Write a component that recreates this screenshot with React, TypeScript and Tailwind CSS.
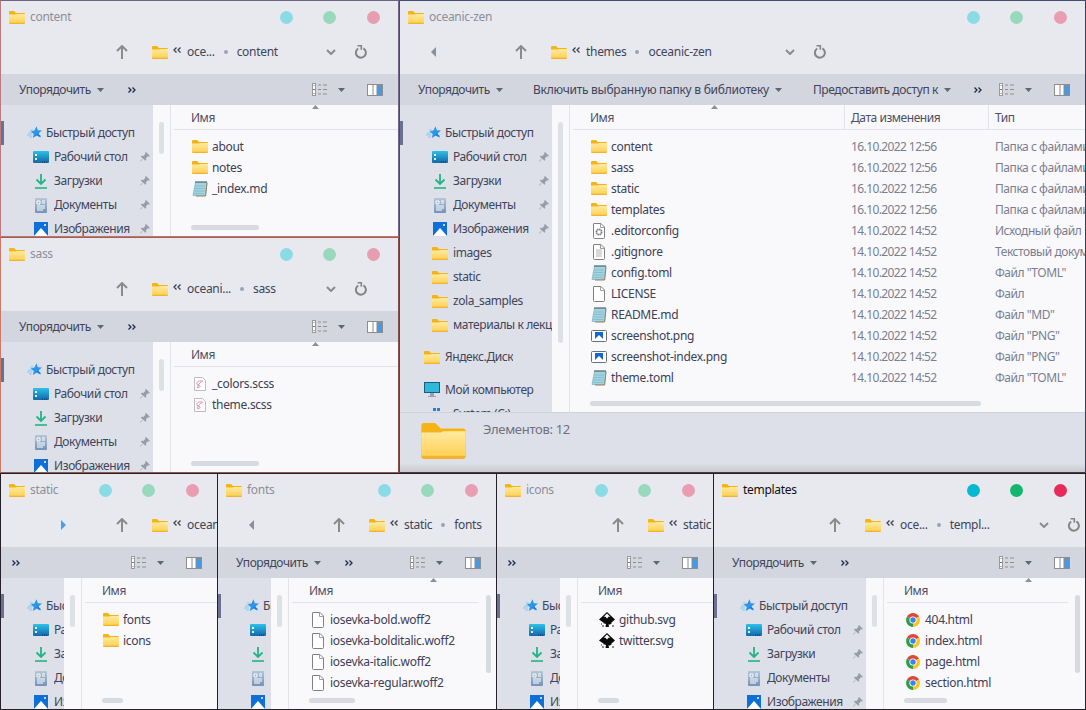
import { useId, type ReactNode } from "react";

function Folder({ big }: { big?: boolean }) {
  const id = useId();
  return (
    <svg viewBox="0 0 16 13" className={big ? "w-[45px] h-[36px] shrink-0" : "w-4 h-[13px] shrink-0"}>
      <defs>
        <linearGradient id={id} x1="0" y1="0" x2="0" y2="1">
          <stop offset="0" stopColor="#ffeaa0" />
          <stop offset="1" stopColor="#ffd257" />
        </linearGradient>
      </defs>
      <path d="M0 1a1 1 0 0 1 1-1h4l2 2h8a1 1 0 0 1 1 1v1H0z" fill="#f6b414" />
      <path d="M0 3h16v9a1 1 0 0 1-1 1H1a1 1 0 0 1-1-1z" fill="#f3b22c" />
      <path d="M0 3.4h7l1-.4h8v8.8H0z" fill={`url(#${id})`} />
    </svg>
  );
}

const Up = () => (
  <svg viewBox="0 0 12 14" className="w-3 h-[14px] shrink-0">
    <path d="M6 1v13M1 6l5-5 5 5" fill="none" stroke="#8b8b8b" strokeWidth="2" />
  </svg>
);

const Dbl = ({ left, color = "#1c2b4d" }: { left?: boolean; color?: string }) => (
  <svg viewBox="0 0 8 6" className={`w-2 h-[6px] shrink-0 ${left ? "rotate-180" : ""}`}>
    <path d="M.5.5 3 3 .5 5.500M4.500.5 7 3 4.500 5.500" fill="none" stroke={color} strokeWidth="1.300" />
  </svg>
);

const Caret = () => (
  <svg viewBox="0 0 7 4" className="w-[7px] h-1 shrink-0">
    <path d="M0 0h7L3.500 4z" fill="#5f6675" />
  </svg>
);

const ViewIcon = () => (
  <svg viewBox="0 0 16 13" className="w-4 h-[13px] shrink-0">
    <rect x=".5" y=".5" width="3" height="12" fill="#fff" stroke="#9a9a9a" />
    <path d="M1 6h2v1H1z" fill="#777" />
    <path d="M1.500 2h1v1h-1z" fill="#4a7" />
    <path d="M1.500 10h1v1h-1z" fill="#d44" />
    <path d="M6 2h3M11 2h4M6 6.500h3M11 6.500h4M6 11h3M11 11h4" stroke="#8f8f8f" />
  </svg>
);

const PaneIcon = () => (
  <svg viewBox="0 0 16 12" className="w-4 h-3 shrink-0">
    <rect width="16" height="12" fill="#8d8d8d" />
    <rect x="1" y="1" width="4.500" height="10" fill="#fff" />
    <rect x="6.500" y="1" width="3" height="10" fill="#fff" />
    <rect x="10.500" y="2" width="4.500" height="9" fill="#4a97e2" />
  </svg>
);

const Refresh = () => (
  <svg viewBox="0 0 12 14" className="w-3 h-[14px] shrink-0">
    <path d="M3.200 3.500A5 5 0 1 0 8.400 3.400" fill="none" stroke="#858585" strokeWidth="2" />
    <path d="M2.500 .8h3.800v4" fill="none" stroke="#858585" strokeWidth="1.600" />
  </svg>
);

const Chevron = () => (
  <svg viewBox="0 0 10 6" className="w-[10px] h-[6px] shrink-0">
    <path d="M1 1l4 4 4-4" fill="none" stroke="#8b8b8b" strokeWidth="2" />
  </svg>
);

const Star = () => (
  <svg viewBox="0 0 15 14" className="w-[15px] h-[14px] shrink-0">
    <path d="M9.500 .3l1.300 4 4.200.2-3.200 2.700 1 4.300-3.600-2.400L5.800 12l1-3.900L3.500 5.400l3.900-.9z" fill="#2a97ee" />
    <path d="M5.800 12l4.400-2.800 3.600 2.400-.5-2.400-3.300-1.700z" fill="#1c82dc" />
    <path d="M1 7h4M0 9h5M2 11h3M3 4h3" stroke="#8cc6f2" />
  </svg>
);

const Desktop = () => (
  <svg viewBox="0 0 16 12" className="w-4 h-3 shrink-0">
    <defs>
      <linearGradient id="dsk" x1="0" y1="0" x2="0" y2="1">
        <stop offset="0" stopColor="#2cc1e8" />
        <stop offset="1" stopColor="#1467a8" />
      </linearGradient>
    </defs>
    <rect width="16" height="12" rx="1" fill="url(#dsk)" />
    <rect x="2" y="3" width="2" height="2" fill="#fff" />
    <rect x="2" y="7" width="2" height="2" fill="#d7f2fb" />
    <path d="M9 11h6" stroke="#0c3f70" strokeDasharray="1 1" />
  </svg>
);

const Download = () => (
  <svg viewBox="0 0 12 15" className="w-3 h-[15px] mx-0.5 shrink-0">
    <path d="M6 0v9.500M1.500 5.500 6 10l4.500-4.500" fill="none" stroke="#22b488" strokeWidth="1.800" />
    <path d="M0 14h12" stroke="#22b488" strokeWidth="1.600" />
  </svg>
);

const Docs = () => (
  <svg viewBox="0 0 12 15" className="w-3 h-[15px] mx-0.5 shrink-0">
    <defs>
      <linearGradient id="dcs" x1="0" y1="0" x2="0" y2="1">
        <stop offset="0" stopColor="#b5c6d8" />
        <stop offset="1" stopColor="#7393b8" />
      </linearGradient>
    </defs>
    <rect width="12" height="15" rx="1" fill="url(#dcs)" />
    <path d="M2 3h3v3H2zM7 3h3M7 5h3M2 8h8M2 10h8M2 12h6" stroke="#fff" fill="none" />
  </svg>
);

const Pictures = () => (
  <svg viewBox="0 0 14 14" className="w-[14px] h-[14px] mx-px shrink-0">
    <rect width="14" height="14" fill="#0f6fd8" />
    <path d="M0 14 7 6l7 8z" fill="#fff" />
    <circle cx="11" cy="3" r="1" fill="#fff" />
  </svg>
);

const Pin = () => (
  <svg viewBox="0 0 10 10" className="w-[10px] h-[10px] shrink-0">
    <path d="M6 0l4 4-1 .6-1-.4-2 2 .2 1.800-.8.8L3 6.500 .6 9.600 0 9l2.800-2.600-2-2L1.500 3.700l1.800.2 2-2-.2-1z" fill="#989ca6" />
  </svg>
);

const Monitor = () => (
  <svg viewBox="0 0 16 16" className="w-4 h-4 shrink-0">
    <rect width="16" height="11" rx="1" fill="#26a2c4" />
    <rect x=".5" y=".5" width="15" height="10" fill="#2fb8d8" stroke="#175f80" />
    <path d="M6 11h4v3H6zM4 14h8v1H4z" fill="#97a3ad" />
  </svg>
);

const Drive = () => (
  <svg viewBox="0 0 16 14" className="w-4 h-[14px] shrink-0">
    <path d="M1 1h3v3H1zM5 1h3v3H5zM1 5h3v3H1zM5 5h3v3H5z" fill="#1c84e0" />
    <path d="M0 11h16v2H0z" fill="#2a2a33" />
  </svg>
);

const NoteFile = () => (
  <svg viewBox="0 0 16 16" className="w-4 h-4 shrink-0">
    <path d="M3.500 1H15l-1.500 13.500H1z" fill="#a4d3e0" stroke="#6ea9ba" strokeWidth=".6" />
    <path d="M3 5h10M2.700 7.500h10M2.400 10h10M2 12.500h10" stroke="#7fbacb" strokeWidth=".8" />
    <path d="M15 2 13.600 15H4" fill="none" stroke="#98805c" />
    <path d="M3.500 1H15" stroke="#333" strokeWidth="1.400" strokeDasharray="1 1" />
  </svg>
);

const Doc = ({ children }: { children?: ReactNode }) => (
  <svg viewBox="0 0 12 16" className="w-3 h-4 mx-0.5 shrink-0">
    <path d="M.5 1a.5.5 0 0 1 .5-.5h7L11.500 4v10.500a1 1 0 0 1-1 1H1.500a1 1 0 0 1-1-1z" fill="#fff" stroke="#808080" />
    <path d="M7.500 .5V4.500h4" fill="none" stroke="#a0a0a0" />
    {children}
  </svg>
);

const GearFile = () => (
  <Doc>
    <circle cx="6" cy="9" r="2.600" fill="none" stroke="#7a7f86" strokeWidth="1.800" strokeDasharray="1.500 .5" />
  </Doc>
);

const TextFile = () => (
  <Doc>
    <path d="M3 6h6M3 8h6M3 10h6M3 12h6" stroke="#b4b4b4" />
  </Doc>
);

const ScssFile = () => (
  <svg viewBox="0 0 12 14" className="w-3 h-[14px] mx-0.5 shrink-0">
    <path d="M.5.5h8l3 3v10H.5z" fill="#fff" stroke="#bdbdbd" />
    <path d="M9 4.500C7 3 3 4 2.800 6.500c-.2 1.800 3.500 1.300 3.200 3-.2 1-1.800 1.700-2.600 1 1-3.500 3-5.500 4.800-6" fill="none" stroke="#e88aa8" />
  </svg>
);

const PngFile = () => (
  <svg viewBox="0 0 16 12" className="w-4 h-3 shrink-0">
    <rect x=".5" y=".5" width="15" height="11" rx="1" fill="#fff" stroke="#6a7078" />
    <rect x="4" y="2" width="8" height="7" fill="#1467cc" />
    <path d="M4 9l4-4 4 4z" fill="#fff" />
  </svg>
);

const Inkscape = () => (
  <svg viewBox="0 0 16 16" className="w-4 h-4 shrink-0">
    <path d="M8 0 16 7.500 12 11h1l-2 1.500H9.500l.5 2.500H6.500l.5-3L4 11h1L0 7.500z" fill="#0a0a0a" />
    <path d="M8 1.500 11.500 5 9.800 4.600 8 6.400 6.200 4.600 4.500 5z" fill="#fff" />
    <path d="M2 12h1M13 14h2M3 14h2" stroke="#222" />
  </svg>
);

const Chrome = () => (
  <svg viewBox="0 0 14 14" className="w-[14px] h-[14px] mx-px shrink-0">
    <path d="M7 7 1 3.500A7 7 0 0 1 13 3.500z" fill="#e2453a" />
    <path d="M7 7h7A7 7 0 0 1 7 14z" fill="#fbc524" />
    <path d="M13 3.500A7 7 0 0 1 14 7H7z" fill="#fbc524" />
    <path d="M7 7v7A7 7 0 0 1 1 3.500z" fill="#2f9e4b" />
    <circle cx="7" cy="7" r="3.600" fill="#fff" />
    <circle cx="7" cy="7" r="2.700" fill="#3b82ec" />
  </svg>
);

type Row = { name: string; icon: ReactNode; date?: string; type?: string };

const folderRow = (name: string): Row => ({ name, icon: <Folder /> });

type Tool = { label: string; className: string };

type Side = { label: string; icon: ReactNode; pinned?: boolean; className?: string };

const quick: Side[] = [
  { label: "Рабочий стол", icon: <Desktop />, pinned: true },
  { label: "Загрузки", icon: <Download />, pinned: true },
  { label: "Документы", icon: <Docs />, pinned: true },
  { label: "Изображения", icon: <Pictures />, pinned: true },
];

const longSide: Side[] = [
  ...quick,
  { label: "images", icon: <Folder /> },
  { label: "static", icon: <Folder /> },
  { label: "zola_samples", icon: <Folder /> },
  { label: "материалы к лекциям", icon: <Folder /> },
  { label: "Яндекс.Диск", icon: <Folder />, className: "pl-[24px] mt-[8px]" },
  { label: "Мой компьютер", icon: <Monitor />, className: "pl-[24px] mt-[9px]" },
  { label: "System (C:)", icon: <Drive /> },
];

type WinProps = {
  title: string;
  active?: boolean;
  className: string;
  sideClass?: string;
  back?: boolean;
  forward?: boolean;
  crumbs: string[];
  addrClass?: string;
  tools?: Tool[];
  compact?: boolean;
  side?: Side[];
  columns?: boolean;
  rows: Row[];
  hbarClass: string;
  vbar?: boolean;
  status?: string;
};

function Win({
  title,
  active,
  className,
  sideClass = "w-[152px]",
  back,
  forward,
  crumbs,
  addrClass = "w-[174px]",
  tools = [],
  compact,
  side = quick,
  columns,
  rows,
  hbarClass,
  vbar,
  status,
}: WinProps) {
  return (
    <div className={`flex flex-col overflow-hidden border bg-[#e8e9ef] tracking-[-0.3px] ${className}`}>
      <div className="h-8 shrink-0 flex items-center pl-2 pr-[18px]">
        <Folder />
        <span className={`ml-[5px] text-xs ${active ? "text-[#111]" : "text-[#8c8e9a]"}`}>{title}</span>
        <div className={`ml-auto w-[13px] h-[13px] rounded-full ${active ? "bg-[#06b9d0]" : "bg-[#8bdbe7]"}`} />
        <div className={`ml-[30px] w-[13px] h-[13px] rounded-full ${active ? "bg-[#12b76f]" : "bg-[#98d9bd]"}`} />
        <div className={`ml-[31px] w-[13px] h-[13px] rounded-full ${active ? "bg-[#e82a58]" : "bg-[#e99db2]"}`} />
      </div>

      <div className="h-[41px] shrink-0 flex items-center pb-[3px] text-xs text-[#41445a] whitespace-nowrap">
        <div className="w-[115px] shrink-0 flex items-center">
          {back && <div className="ml-[31px] border-y-[5px] border-y-transparent border-r-[5px] border-r-[#8b8f98]" />}
          {forward && <div className="ml-[60px] border-y-[5px] border-y-transparent border-l-[5px] border-l-[#4a9fe8]" />}
        </div>
        <div className="w-[36px] shrink-0">
          <Up />
        </div>
        <div className={`${addrClass} shrink-0 flex items-center`}>
          <Folder />
          <div className="ml-[5px] mr-[6px] mb-1">
            <Dbl left color="#3a3f50" />
          </div>
          <span>{crumbs[0]}</span>
          {crumbs[1] && (
            <>
              <span className="mx-[9px] w-1 h-1 rounded-full bg-[#9aa3b5]" />
              <span>{crumbs[1]}</span>
            </>
          )}
        </div>
        <Chevron />
        <div className="ml-[19px]">
          <Refresh />
        </div>
      </div>

      <div
        className={`h-[31px] shrink-0 flex items-center bg-[#d3d6de] pr-[15px] text-xs text-[#41445a] whitespace-nowrap tracking-[-0.45px] ${
          compact ? "pl-[11px]" : "pl-[18px]"
        }`}
      >
        {!compact && <span className="w-[72px] shrink-0">Упорядочить</span>}
        {!compact && (
          <div className="ml-[6px]">
            <Caret />
          </div>
        )}
        {tools.map((t) => (
          <div key={t.label} className={`flex items-center shrink-0 ${t.className}`}>
            <span>{t.label}</span>
            <div className="ml-[6px]">
              <Caret />
            </div>
          </div>
        ))}
        <div className={compact ? "" : tools.length ? "ml-[23px]" : "ml-6"}>
          <Dbl />
        </div>
        <div className="ml-auto flex items-center">
          <ViewIcon />
          <div className="ml-[10px]">
            <Caret />
          </div>
          <div className="ml-[22px]">
            <PaneIcon />
          </div>
        </div>
      </div>

      <div className="flex-1 min-h-0 flex">
        <div className={`${sideClass} shrink-0 overflow-hidden bg-[#dde0e8] pt-4 text-xs text-[#41445a] whitespace-nowrap tracking-[-0.4px]`}>
          <div className="w-[152px] h-6 flex items-center">
            <div className="w-[3px] h-full bg-[#6c7090] shrink-0" />
            <div className="pl-[23px]">
              <Star />
            </div>
            <span className="ml-1">Быстрый доступ</span>
          </div>
          {side.map((s) => (
            <div key={s.label} className={`w-[152px] h-6 flex items-center overflow-hidden ${s.className ?? "pl-[32px]"}`}>
              {s.icon}
              <span className="ml-[5px] overflow-hidden">{s.label}</span>
              {s.pinned && (
                <div className="ml-auto pr-[3px]">
                  <Pin />
                </div>
              )}
            </div>
          ))}
        </div>

        <div className="w-[17px] shrink-0 bg-[#f9f9fc] pt-[17px] pl-[6px]">
          <div className={`w-[5px] rounded-full bg-[#dde0e4] ${side.length > 4 ? "h-[221px]" : "h-[32px]"}`} />
        </div>

        <div className="relative flex-1 min-w-0 overflow-hidden border-l border-[#e2e4ea] bg-[#f9f9fc]">
          <svg viewBox="0 0 7 4" className="absolute left-[141px] top-0 w-[7px] h-1">
            <path d="M3.500 0 7 4H0z" fill="#8a909c" />
          </svg>
          <div className={`h-[25px] ml-[3px] flex items-center border-b border-[#e1e3ea] text-xs text-[#4d4f62] tracking-[-0.45px] ${vbar ? "mr-[17px]" : ""}`}>
            {columns ? (
              <>
                <span className="w-[272px] h-full flex items-center pl-[17px] pt-[2px] border-r border-[#e1e3ea]">Имя</span>
                <span className="w-[144px] h-full flex items-center pl-[6px] pt-[2px] border-r border-[#e1e3ea]">Дата изменения</span>
                <span className="pl-[6px] pt-[2px]">Тип</span>
              </>
            ) : (
              <span className="pl-[17px] pt-[2px]">Имя</span>
            )}
          </div>
          <div className="pt-[6px]">
            {rows.map((r) => (
              <div key={r.name} className="h-[21px] flex items-center pl-[21px] text-xs text-[#3d4056] whitespace-nowrap">
                <div className={columns ? "w-[260px] flex items-center shrink-0" : "flex items-center"}>
                  {r.icon}
                  <span className="ml-1">{r.name}</span>
                </div>
                {columns && <span className="w-[144px] shrink-0 text-[#7b7e8e] tracking-[-0.6px]">{r.date}</span>}
                {columns && <span className="text-[#7b7e8e] tracking-[-0.45px]">{r.type}</span>}
              </div>
            ))}
          </div>
          <div className={`absolute left-[20px] bottom-[6px] h-[5px] rounded-full bg-[#d7dade] ${hbarClass}`} />
          {vbar && <div className="absolute right-[5px] top-[17px] w-[5px] h-[78px] rounded-full bg-[#d7dade]" />}
        </div>
      </div>

      {status && (
        <div className="h-[60px] shrink-0 flex items-start pt-[10px] pl-[21px] border-t border-[#d0d3da] bg-[linear-gradient(#dde0e8_85%,#c9cacd)] text-[13px] text-[#6f7180]">
          <Folder big />
          <span className="ml-[17px] -mt-[3px]">{status}</span>
        </div>
      )}
    </div>
  );
}

const mainRows: Row[] = [
  { ...folderRow("content"), date: "16.10.2022 12:56", type: "Папка с файлами" },
  { ...folderRow("sass"), date: "16.10.2022 12:56", type: "Папка с файлами" },
  { ...folderRow("static"), date: "16.10.2022 12:56", type: "Папка с файлами" },
  { ...folderRow("templates"), date: "16.10.2022 12:56", type: "Папка с файлами" },
  { name: ".editorconfig", icon: <GearFile />, date: "14.10.2022 14:52", type: "Исходный файл" },
  { name: ".gitignore", icon: <TextFile />, date: "14.10.2022 14:52", type: "Текстовый документ" },
  { name: "config.toml", icon: <NoteFile />, date: "14.10.2022 14:52", type: 'Файл "TOML"' },
  { name: "LICENSE", icon: <Doc />, date: "14.10.2022 14:52", type: "Файл" },
  { name: "README.md", icon: <NoteFile />, date: "14.10.2022 14:52", type: 'Файл "MD"' },
  { name: "screenshot.png", icon: <PngFile />, date: "14.10.2022 14:52", type: 'Файл "PNG"' },
  { name: "screenshot-index.png", icon: <PngFile />, date: "14.10.2022 14:52", type: 'Файл "PNG"' },
  { name: "theme.toml", icon: <NoteFile />, date: "14.10.2022 14:52", type: 'Файл "TOML"' },
];

export default function App() {
  return (
    <div className="w-[1086px] h-[710px] overflow-hidden bg-[#2a2226] font-['Noto_Sans',sans-serif]">
      <div className="flex h-[473px]">
        <div className="w-[399px] shrink-0 flex flex-col">
          <Win
            title="content"
            className="h-[237px] border-t-[#6d6482] border-l-[#b87a80] border-b-[#b77a70] border-r-[#71658a]"
            crumbs={["oce...", "content"]}
            rows={[folderRow("about"), folderRow("notes"), { name: "_index.md", icon: <NoteFile /> }]}
            hbarClass="w-[68px]"
          />
          <Win
            title="sass"
            className="h-[236px] border-t-[#a85a55] border-l-[#cc7a68] border-b-[#8d5a50] border-r-[#8a4a48]"
            crumbs={["oceani...", "sass"]}
            rows={[
              { name: "_colors.scss", icon: <ScssFile /> },
              { name: "theme.scss", icon: <ScssFile /> },
            ]}
            hbarClass="w-[68px]"
          />
        </div>
        <Win
          title="oceanic-zen"
          className="flex-1 min-w-0 border-t-[#4a4a78] border-l-[#4a4a70] border-b-[#4a3a40] border-r-[#3a3a60]"
          back
          crumbs={["themes", "oceanic-zen"]}
          addrClass="w-[234px]"
          tools={[
            { label: "Включить выбранную папку в библиотеку", className: "ml-[30px] tracking-[-0.26px]" },
            { label: "Предоставить доступ к", className: "ml-[31px] tracking-[-0.4px]" },
          ]}
          side={longSide}
          columns
          rows={mainRows}
          hbarClass="w-[391px]"
          status="Элементов: 12"
        />
      </div>
      <div className="flex h-[237px]">
        <Win
          title="static"
          className="w-[218px] shrink-0 border-[#26202a]"
          sideClass="w-[63px]"
          forward
          crumbs={["oceanic-zen", "static"]}
          compact
          rows={[folderRow("fonts"), folderRow("icons")]}
          hbarClass="w-[21px]"
        />
        <Win
          title="fonts"
          className="w-[280px] -ml-px shrink-0 border-[#26202a]"
          sideClass="w-[53px]"
          back
          crumbs={["static", "fonts"]}
          rows={[
            { name: "iosevka-bold.woff2", icon: <Doc /> },
            { name: "iosevka-bolditalic.woff2", icon: <Doc /> },
            { name: "iosevka-italic.woff2", icon: <Doc /> },
            { name: "iosevka-regular.woff2", icon: <Doc /> },
          ]}
          hbarClass="w-[46px]"
          vbar
        />
        <Win
          title="icons"
          className="w-[218px] -ml-px shrink-0 border-[#26202a]"
          sideClass="w-[63px]"
          crumbs={["static", "icons"]}
          compact
          rows={[
            { name: "github.svg", icon: <Inkscape /> },
            { name: "twitter.svg", icon: <Inkscape /> },
          ]}
          hbarClass="w-[21px]"
        />
        <Win
          title="templates"
          active
          className="flex-1 min-w-0 -ml-px border-[#26202a]"
          crumbs={["oce...", "templ..."]}
          rows={[
            { name: "404.html", icon: <Chrome /> },
            { name: "index.html", icon: <Chrome /> },
            { name: "page.html", icon: <Chrome /> },
            { name: "section.html", icon: <Chrome /> },
          ]}
          hbarClass="w-[43px]"
          vbar
        />
      </div>
    </div>
  );
}
